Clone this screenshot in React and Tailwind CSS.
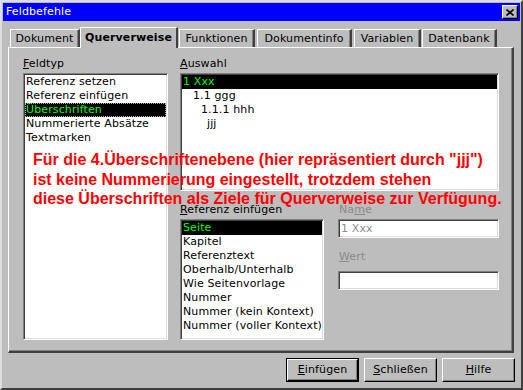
import React from "react";

const raised =
  "border border-t-white border-l-white border-r-black border-b-black shadow-[inset_-1px_-1px_0_#808080]";
const sunken =
  "border border-t-[#808080] border-l-[#808080] border-r-white border-b-white shadow-[inset_1px_1px_0_#404040,inset_-1px_-1px_0_#dcdcdc]";

function Tab({ label, w, ml, active }) {
  if (active) {
    return (
      <div
        className={`relative z-10 -mb-px flex h-[21px] shrink-0 items-start justify-center border-l border-t border-r-2 border-t-white border-l-white border-r-[#404040] bg-[#bdbdbd] pt-[3px] font-bold`}
        style={{ width: w, marginLeft: ml }}
      >
        <span className="leading-[14px]">{label}</span>
      </div>
    );
  }
  return (
    <div
      className="flex h-[18px] shrink-0 items-center justify-center border-l border-t border-r-2 border-t-white border-l-white border-r-[#404040] pt-px shadow-[inset_-1px_0_0_#808080]"
      style={{ width: w, marginLeft: ml }}
    >
      <span className="leading-[14px]">{label}</span>
    </div>
  );
}

function Row({ children, selected, focus, indent = 0 }) {
  return (
    <div
      className={`h-[14px] whitespace-nowrap leading-[14px] ${
        selected ? "bg-black text-[#00ff00]" : "text-black"
      } ${focus ? "outline-1 outline-dotted -outline-offset-1 outline-[#b0b0b0]" : ""}`}
      style={{ paddingLeft: 1 + indent }}
    >
      {children}
    </div>
  );
}

export default function App() {
  return (
    <div className="relative flex h-[390px] w-[523px] flex-col overflow-hidden border-2 border-t-[#dedede] border-l-[#dedede] border-r-[#404040] border-b-[#404040] bg-[#bdbdbd] p-px font-['DejaVu_Sans',sans-serif] text-[11px] tracking-[0.12px] text-black">
      {/* Title bar */}
      <div className="flex h-[18px] shrink-0 items-center justify-between bg-[#0000ff] pl-[3px] pr-[2px]">
        <span className="leading-[14px] text-white">Feldbefehle</span>
        <div className={`flex h-[14px] w-[16px] items-center justify-center bg-[#bdbdbd] ${raised}`}>
          <svg width="8" height="7" viewBox="0 0 8 7">
            <path d="M0.5 0.5 L7.5 6.5 M7.5 0.5 L0.5 6.5" stroke="black" strokeWidth="1.6" />
          </svg>
        </div>
      </div>

      {/* Tabs */}
      <div className="mt-[6px] flex h-[20px] shrink-0 items-end">
        <Tab label="Dokument" w={70} ml={7} />
        <Tab label="Querverweise" w={98} ml={0} active />
        <Tab label="Funktionen" w={76} ml={1} />
        <Tab label="Dokumentinfo" w={95} ml={2} />
        <Tab label="Variablen" w={67} ml={2} />
        <Tab label="Datenbank" w={75} ml={1} />
      </div>

      {/* Panel */}
      <div className="ml-[5px] flex h-[306px] w-[506px] shrink-0 border-l border-t border-r-2 border-b-2 border-t-white border-l-white border-r-[#404040] border-b-[#404040] pl-[14px] shadow-[inset_-1px_-1px_0_#808080]">
        {/* Column 1 */}
        <div className="flex w-[145px] flex-col">
          <div className="h-[25px] pt-[9px] leading-[13px]">
            <u>F</u>eldtyp
          </div>
          <div className={`h-[267px] bg-white p-px ${sunken}`}>
            <Row>Referenz setzen</Row>
            <Row>Referenz einfügen</Row>
            <Row selected focus>Überschriften</Row>
            <Row>Nummerierte Absätze</Row>
            <Row>Textmarken</Row>
          </div>
        </div>

        {/* Column 2 */}
        <div className="ml-[12px] flex w-[319px] flex-col">
          <div className="h-[25px] pt-[9px] leading-[13px]">
            <u>A</u>uswahl
          </div>
          <div className={`h-[118px] bg-white p-px ${sunken}`}>
            <Row selected>1 Xxx</Row>
            <Row indent={10}>1.1 ggg</Row>
            <Row indent={18}>1.1.1 hhh</Row>
            <Row indent={24}>jjj</Row>
          </div>
          <div className="flex">
            <div className="flex w-[144px] flex-col">
              <div className="h-[28px] pt-[12px] leading-[13px]">
                <u>R</u>eferenz einfügen
              </div>
              <div className={`h-[121px] overflow-hidden bg-white p-px ${sunken}`}>
                <Row selected>Seite</Row>
                <Row>Kapitel</Row>
                <Row>Referenztext</Row>
                <Row>Oberhalb/Unterhalb</Row>
                <Row>Wie Seitenvorlage</Row>
                <Row>Nummer</Row>
                <Row>Nummer (kein Kontext)</Row>
                <Row>Nummer (voller Kontext)</Row>
              </div>
            </div>
            <div className="ml-[14px] flex w-[161px] flex-col text-[#8a8a8a]">
              <div className="h-[28px] pt-[12px] pl-px leading-[13px]">
                Na<u>m</u>e
              </div>
              <div className={`flex h-[19px] items-center bg-white pl-[2px] ${sunken}`}>
                <span className="leading-[14px]">1 Xxx</span>
              </div>
              <div className="h-[33px] pt-[12px] pl-px leading-[13px]">
                <u>W</u>ert
              </div>
              <div className={`h-[19px] bg-white ${sunken}`} />
            </div>
          </div>
        </div>
      </div>

      {/* Buttons */}
      <div className="mt-[5px] flex shrink-0 justify-end gap-[5px] pr-[5px]">
        <div className="h-[24px] w-[73px] border border-black">
          <div className={`flex h-full w-full items-center justify-center ${raised}`}>
            <span className="leading-[14px]">
              <u>E</u>infügen
            </span>
          </div>
        </div>
        <div className={`flex h-[24px] w-[73px] items-center justify-center ${raised}`}>
          <span className="leading-[14px]">
            <u>S</u>chließen
          </span>
        </div>
        <div className={`flex h-[24px] w-[73px] items-center justify-center ${raised}`}>
          <span className="leading-[14px]">
            <u>H</u>ilfe
          </span>
        </div>
      </div>

      {/* Red annotation overlay */}
      <div className="pointer-events-none absolute left-[31px] top-[148px] whitespace-nowrap font-['Liberation_Sans',Arial,sans-serif] text-[16px] font-bold leading-[19.5px] tracking-normal text-[#ff0000]">
        Für die 4.Überschriftenebene (hier repräsentiert durch "jjj")
        <br />
        ist keine Nummerierung eingestellt, trotzdem stehen
        <br />
        diese Überschriften als Ziele für Querverweise zur Verfügung.
      </div>
    </div>
  );
}
